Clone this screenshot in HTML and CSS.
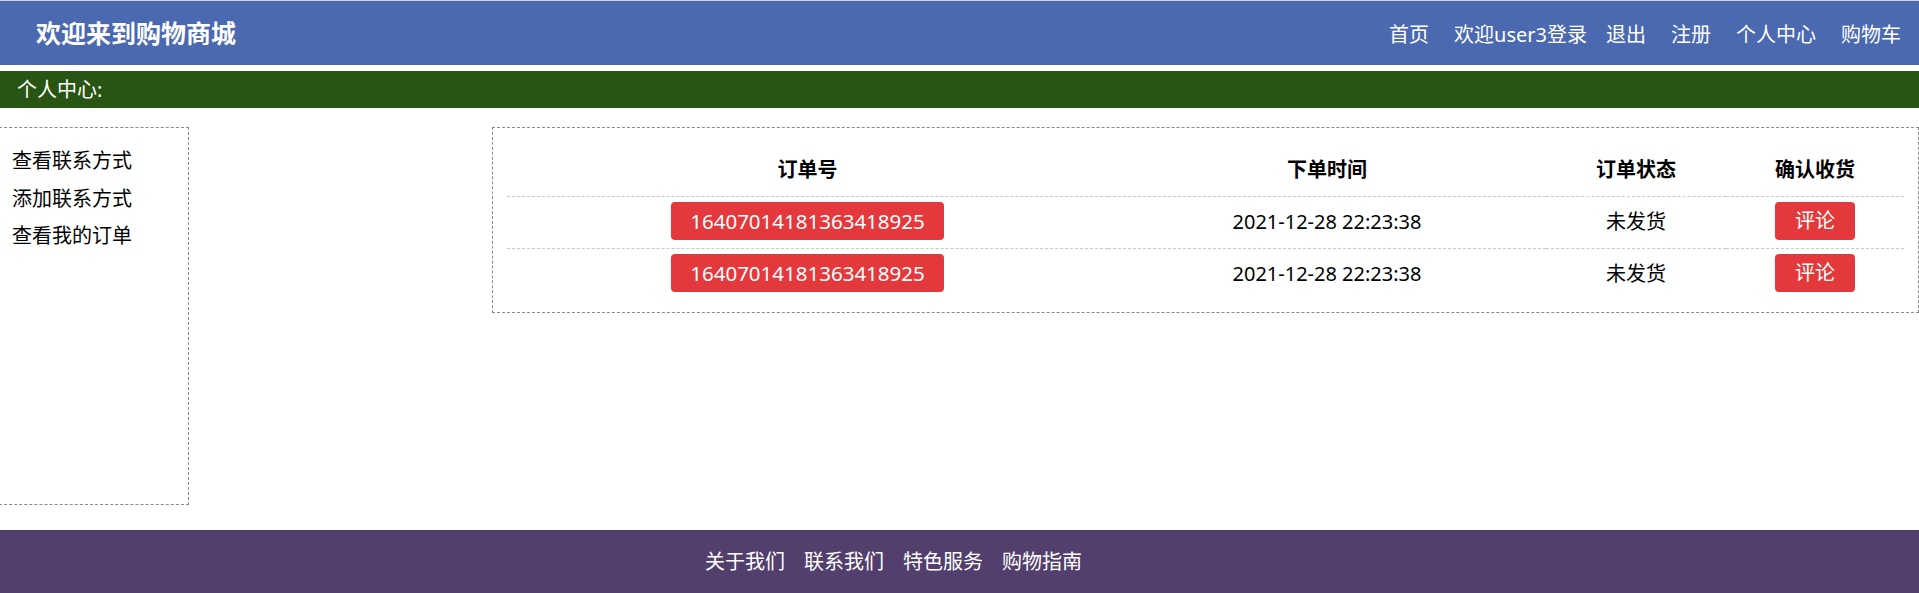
FILE: index.html
```html
<!DOCTYPE html>
<html lang="zh-CN">
<head>
<meta charset="utf-8">
<title>个人中心</title>
<link rel="stylesheet" href="styles.css">
</head>
<body>
<div class="page">
  <header class="header">
    <h1 class="logo">欢迎来到购物商城</h1>
    <nav class="nav">
      <a class="nav-link" href="#">首页</a>
      <span class="nav-link welcome">欢迎user3登录</span>
      <a class="nav-link" href="#">退出</a>
      <a class="nav-link" href="#">注册</a>
      <a class="nav-link" href="#">个人中心</a>
      <a class="nav-link" href="#">购物车</a>
    </nav>
  </header>
  <div class="crumb">个人中心:</div>
  <main class="main">
    <aside class="side">
      <ul class="side-menu">
        <li><a href="#">查看联系方式</a></li>
        <li><a href="#">添加联系方式</a></li>
        <li><a href="#">查看我的订单</a></li>
      </ul>
    </aside>
    <section class="orders">
      <table class="order-table">
        <colgroup>
          <col class="c1"><col class="c2"><col class="c3"><col class="c4">
        </colgroup>
        <thead>
          <tr><th>订单号</th><th>下单时间</th><th>订单状态</th><th>确认收货</th></tr>
        </thead>
        <tbody>
          <tr>
            <td><a class="btn btn-no" href="#">16407014181363418925</a></td>
            <td>2021-12-28 22:23:38</td>
            <td>未发货</td>
            <td><a class="btn" href="#">评论</a></td>
          </tr>
          <tr>
            <td><a class="btn btn-no" href="#">16407014181363418925</a></td>
            <td>2021-12-28 22:23:38</td>
            <td>未发货</td>
            <td><a class="btn" href="#">评论</a></td>
          </tr>
        </tbody>
      </table>
    </section>
  </main>
  <footer class="footer">
    <a href="#">关于我们</a>
    <a href="#">联系我们</a>
    <a href="#">特色服务</a>
    <a href="#">购物指南</a>
  </footer>
</div>
</body>
</html>
```
FILE: styles.css
```css
* { box-sizing: border-box; }
html, body { margin: 0; padding: 0; }
body {
  font-family: "Noto Sans", "Noto Sans CJK SC", sans-serif;
  font-size: 20px;
  color: #000;
  background: #fff;
  overflow: hidden;
}
a { color: inherit; text-decoration: none; }
.page { border-top: 1px solid #d4d4d4; }

.header {
  height: 64px;
  background: #4a69b0;
  display: flex;
  align-items: center;
  justify-content: space-between;
  padding: 0 18px 0 36px;
  color: #fff;
}
.logo {
  margin: 0;
  font-size: 25px;
  font-weight: bold;
  line-height: 30px;
}
.nav { display: flex; gap: 25px; font-size: 20px; line-height: 26px; padding-top: 3px; }
.welcome { margin-right: -6px; }

.crumb {
  margin-top: 6px;
  height: 37px;
  line-height: 37px;
  background: #285514;
  color: #fff;
  padding-left: 17px;
  font-size: 20px;
}

.main {
  display: flex;
  justify-content: space-between;
  align-items: flex-start;
  margin-top: 19px;
}
.side {
  width: 190px;
  height: 378px;
  margin-left: -1px;
  border: 1px dashed #8a8a8a;
  padding: 14px 0 0 12px;
}
.side-menu { list-style: none; margin: 0; padding: 0; }
.side-menu li { line-height: 37.5px; font-size: 20px; }

.orders {
  width: 1427px;
  border: 1px dashed #8a8a8a;
  padding: 16px 14px 12px;
}
.order-table {
  width: 1397px;
  table-layout: fixed;
  border-collapse: collapse;
}
.c1 { width: 601px; }
.c2 { width: 438px; }
.c3 { width: 180px; }
.c4 { width: 178px; }
.order-table th, .order-table td {
  height: 52px;
  padding: 0;
  text-align: center;
  vertical-align: middle;
  font-size: 20px;
  line-height: 26px;
}
.order-table th { font-weight: bold; }
.order-table thead tr, .order-table tbody tr:not(:last-child) {
  border-bottom: 1px dashed #c8c8c8;
}
.btn {
  display: inline-block;
  height: 38px;
  line-height: 38px;
  padding: 0 20px;
  background: #e4393c;
  color: #fff;
  border-radius: 4px;
  font-size: 20px;
  vertical-align: middle;
  position: relative;
  top: -1px;
}
.btn-no { font-size: 20.5px; padding: 0 19px; }

.footer {
  margin-top: 25px;
  height: 63px;
  background: #523f6d;
  color: #fff;
  display: flex;
  justify-content: center;
  align-items: center;
  gap: 19px;
  padding-right: 132px;
  font-size: 20px;
  line-height: 26px;
}
```
